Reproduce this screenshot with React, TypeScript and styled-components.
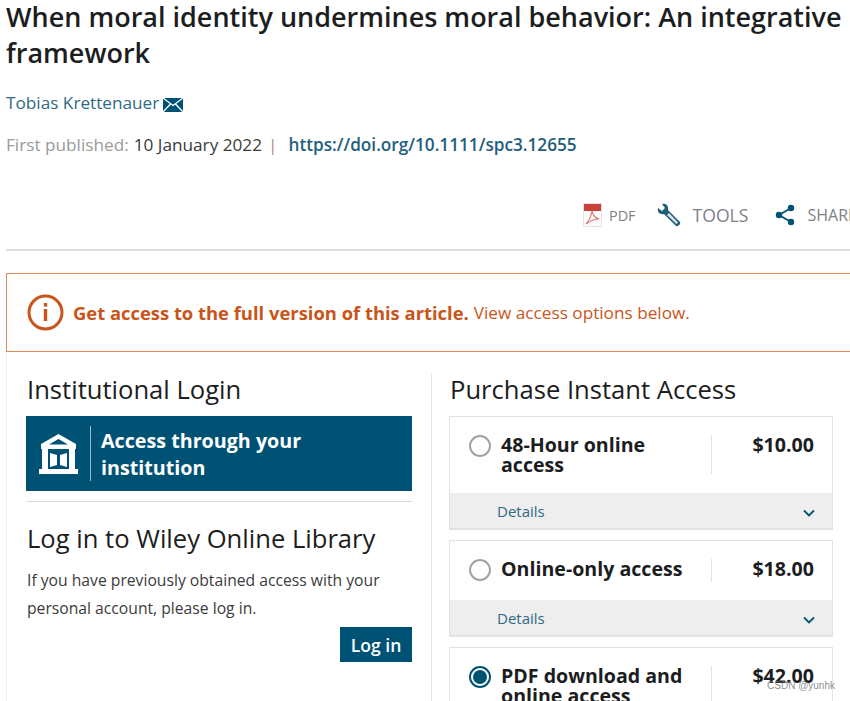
import styled, { createGlobalStyle } from "styled-components";

const GlobalStyle = createGlobalStyle`
  html, body {
    margin: 0;
    padding: 0;
    background: #fff;
    overflow: hidden;
  }
  body {
    font-family: "Open Sans", "Liberation Sans", sans-serif;
    color: #1b1b1b;
  }
`;

const Page = styled.div`
  width: 850px;
  height: 701px;
  overflow: hidden;
  padding-left: 6px;
  box-sizing: border-box;
  position: relative;
`;

const Title = styled.h1`
  margin: -1px 0 0;
  font-size: 27px;
  line-height: 36px;
  font-weight: 600;
  color: #1c1d1e;
  white-space: nowrap;
`;

const Author = styled.div`
  margin-top: 18px;
  height: 26px;
  display: flex;
  align-items: center;
  font-size: 17.2px;
  color: #2f6a85;
`;

const Mail = styled.svg`
  margin-left: 4px;
  margin-top: 6px;
`;

const Meta = styled.div`
  margin-top: 16px;
  height: 26px;
  display: flex;
  align-items: center;
  font-size: 17.2px;
  white-space: nowrap;
`;

const MetaLabel = styled.span`
  color: #9a9a9a;
`;

const MetaDate = styled.span`
  color: #3a3a3a;
  margin-left: 5px;
`;

const MetaBar = styled.span`
  color: #b08a70;
  margin: 0 11px 0 6px;
`;

const DoiLink = styled.span`
  color: #1f5e7d;
  font-weight: 600;
`;

const Tools = styled.div`
  margin-top: 42px;
  height: 32px;
  display: flex;
  align-items: center;
  padding-left: 577px;
  white-space: nowrap;
  border-bottom: 2px solid #dcdcdc;
  padding-bottom: 18px;
`;

const ToolItem = styled.div<{ $gap: number; $next: number; $size: number }>`
  display: flex;
  align-items: center;
  gap: ${(p) => p.$gap}px;
  margin-right: ${(p) => p.$next}px;
  font-size: ${(p) => p.$size}px;
  color: #7d8186;
`;

const Banner = styled.div`
  margin-top: 22px;
  height: 77px;
  width: 860px;
  border: 1px solid #e08a55;
  display: flex;
  align-items: center;
  padding-left: 20px;
  font-size: 17.2px;
  white-space: nowrap;
  color: #c9551a;
`;

const BannerStrong = styled.strong`
  font-size: 18.4px;
  font-weight: 700;
  margin-left: 9px;
`;

const BannerRest = styled.span`
  margin-left: 5px;
`;

const Columns = styled.div`
  display: grid;
  grid-template-columns: 425px 1fr;
  border-left: 1px solid #eeeeee;
  height: 360px;
`;

const LeftCol = styled.div`
  padding: 0 19px 0 20px;
  border-right: 1px solid #e4e4e4;
  margin-top: 21px;
`;

const RightCol = styled.div`
  padding: 0 17px 0 17px;
  margin-top: 21px;
`;

const Heading = styled.h2`
  margin: 0;
  font-size: 25.6px;
  line-height: 34px;
  font-weight: 400;
  color: #1c1d1e;
  white-space: nowrap;
`;

const PurchaseHeading = styled(Heading)`
  padding-left: 1px;
`;

const InstButton = styled.div`
  margin: 9px 0 0 -1px;
  height: 75px;
  background: #005274;
  display: flex;
  align-items: center;
  padding-left: 12px;
  color: #fff;
`;

const InstDivider = styled.div`
  width: 1px;
  height: 55px;
  background: #9fbccb;
  margin: 0 10px 0 11px;
`;

const InstText = styled.div`
  font-size: 19.7px;
  line-height: 27px;
  font-weight: 700;
`;

const Rule = styled.div`
  margin-top: 10px;
  height: 1px;
  background: #d8d8d8;
`;

const LoginHeading = styled(Heading)`
  margin-top: 20px;
`;

const LoginText = styled.p`
  margin: 10px 0 0;
  font-size: 15.7px;
  line-height: 28px;
  color: #3b3b3b;
`;

const LoginRow = styled.div`
  margin-top: 5px;
  display: flex;
  justify-content: flex-end;
`;

const LoginButton = styled.div`
  width: 72px;
  height: 35px;
  background: #005274;
  color: #fff;
  font-size: 17.6px;
  font-weight: 600;
  display: flex;
  align-items: center;
  justify-content: center;
`;

const OptionList = styled.div`
  margin-top: 9px;
  display: flex;
  flex-direction: column;
  gap: 10px;
`;

const Option = styled.div`
  border: 1px solid #e2e2e2;
  border-bottom-width: 2px;
`;

const OptionMain = styled.div<{ $height: number }>`
  height: ${(p) => p.$height}px;
  display: flex;
  align-items: flex-start;
  padding: 18px 18px 0 19px;
  box-sizing: border-box;
`;

const Radio = styled.div<{ $on?: boolean }>`
  flex: none;
  width: 22px;
  height: 22px;
  box-sizing: border-box;
  border-radius: 50%;
  border: 2px solid ${(p) => (p.$on ? "#005274" : "#a3a3a3")};
  display: flex;
  align-items: center;
  justify-content: center;

  &::after {
    content: "";
    display: ${(p) => (p.$on ? "block" : "none")};
    width: 14px;
    height: 14px;
    border-radius: 50%;
    background: #005274;
  }
`;

const OptionName = styled.div`
  flex: none;
  width: 210px;
  box-sizing: border-box;
  padding-right: 10px;
  margin-left: 10px;
  font-size: 19.6px;
  line-height: 20px;
  font-weight: 700;
  color: #1c1d1e;
`;

const OptionPrice = styled.div<{ $rule: number }>`
  flex: 1;
  height: ${(p) => p.$rule}px;
  border-left: 1px solid #e2e2e2;
  text-align: right;
  font-size: 19.6px;
  line-height: 20px;
  font-weight: 700;
  color: #1c1d1e;
`;

const DetailsBar = styled.div`
  height: 35px;
  background: #eeeeee;
  display: flex;
  align-items: center;
  justify-content: space-between;
  padding: 0 16px 0 47px;
  font-size: 15px;
  color: #2f6a85;
`;

const ChevronIcon = styled.svg`
  margin-top: 4px;
`;

const Watermark = styled.div`
  position: absolute;
  right: 15px;
  top: 680px;
  font-size: 10px;
  font-family: "Liberation Sans", sans-serif;
  color: rgba(120, 120, 120, 0.85);
`;

function Chevron() {
  return (
    <ChevronIcon width="14" height="10" viewBox="0 0 14 10" fill="none">
      <path d="M2 2.5 L7 7.5 L12 2.5" stroke="#005274" strokeWidth="1.8" />
    </ChevronIcon>
  );
}

const plans = [
  { name: "48-Hour online access", price: "$10.00", height: 76, rule: 39, on: false },
  { name: "Online-only access", price: "$18.00", height: 59, rule: 23, on: false },
  { name: "PDF download and online access", price: "$42.00", height: 76, rule: 39, on: true },
];

export default function App() {
  return (
    <Page>
      <GlobalStyle />
      <Title>
        When moral identity undermines moral behavior: An integrative
        <br />
        framework
      </Title>
      <Author>
        Tobias Krettenauer
        <Mail width="20" height="14" viewBox="0 0 20 14">
          <rect width="20" height="14" fill="#005274" />
          <path d="M0 0 L10 7.5 L20 0 M0 14 L7.5 6 M20 14 L12.5 6" stroke="#fff" strokeWidth="1.3" fill="none" />
        </Mail>
      </Author>
      <Meta>
        <MetaLabel>First published:</MetaLabel>
        <MetaDate>10 January 2022</MetaDate>
        <MetaBar>|</MetaBar>
        <DoiLink>https://doi.org/10.1111/spc3.12655</DoiLink>
      </Meta>
      <Tools>
        <ToolItem $gap={7} $next={21} $size={14.4}>
          <svg width="19" height="24" viewBox="0 0 19 24">
            <rect x="0.5" y="0.5" width="18" height="23" fill="#fbfbfb" stroke="#e3e3e3" />
            <rect x="1" y="1" width="17" height="7" fill="#c9403a" />
            <path d="M9 8 C8 14 6 18 3 21 C7 18 11 16 16 16 C12 15 10 12 9 8 Z" fill="none" stroke="#dc7d78" strokeWidth="1.2" />
          </svg>
          PDF
        </ToolItem>
        <ToolItem $gap={12} $next={27} $size={17.6}>
          <svg width="24" height="24" viewBox="0 0 24 24">
            <path d="M1 5 L5 8 L8 5 L5 1 C9 0 12 3 11 7 L23 19 C24 21 21 24 19 23 L7 11 C3 12 0 9 1 5 Z" fill="#1f5e7d" />
            <path d="M12 10 L21 19.5 L19.5 21 L10 12 Z" fill="#dfe8ed" />
          </svg>
          TOOLS
        </ToolItem>
        <ToolItem $gap={12} $next={0} $size={16}>
          <svg width="20" height="22" viewBox="0 0 20 22">
            <path d="M16 4 L4 11 L16 18" stroke="#005274" strokeWidth="1.8" fill="none" />
            <circle cx="16" cy="4" r="3.2" fill="#005274" />
            <circle cx="4" cy="11" r="3.2" fill="#005274" />
            <circle cx="16" cy="18" r="3.2" fill="#005274" />
          </svg>
          SHARE
        </ToolItem>
      </Tools>
      <Banner>
        <svg width="37" height="37" viewBox="0 0 37 37">
          <circle cx="18.5" cy="18.5" r="16.5" fill="none" stroke="#c9551a" strokeWidth="3" />
          <rect x="16.8" y="15" width="3.4" height="12" fill="#c9551a" />
          <rect x="16.8" y="9" width="3.4" height="3.6" fill="#c9551a" />
        </svg>
        <BannerStrong>Get access to the full version of this article.</BannerStrong>
        <BannerRest>View access options below.</BannerRest>
      </Banner>
      <Columns>
        <LeftCol>
          <Heading>Institutional Login</Heading>
          <InstButton>
            <svg width="41" height="40" viewBox="0 0 41 40" fill="#fff">
              <path d="M20.5 0 L38 10 L38 15 L3 15 L3 10 Z M20.5 5 L11 10.5 L30 10.5 Z" fillRule="evenodd" />
              <rect x="4" y="15" width="6" height="21" />
              <rect x="31" y="15" width="6" height="21" />
              <path d="M12 19 L19 21 L19 31 L12 33 Z M29 19 L22 21 L22 31 L29 33 Z" />
              <rect x="1" y="35" width="39" height="5" />
            </svg>
            <InstDivider />
            <InstText>
              Access through your
              <br />
              institution
            </InstText>
          </InstButton>
          <Rule />
          <LoginHeading>Log in to Wiley Online Library</LoginHeading>
          <LoginText>
            If you have previously obtained access with your
            <br />
            personal account, please log in.
          </LoginText>
          <LoginRow>
            <LoginButton>Log in</LoginButton>
          </LoginRow>
        </LeftCol>
        <RightCol>
          <PurchaseHeading>Purchase Instant Access</PurchaseHeading>
          <OptionList>
            {plans.map((plan) => (
              <Option key={plan.name}>
                <OptionMain $height={plan.height}>
                  <Radio $on={plan.on} />
                  <OptionName>{plan.name}</OptionName>
                  <OptionPrice $rule={plan.rule}>{plan.price}</OptionPrice>
                </OptionMain>
                <DetailsBar>
                  Details
                  <Chevron />
                </DetailsBar>
              </Option>
            ))}
          </OptionList>
        </RightCol>
      </Columns>
      <Watermark>CSDN @yunhk</Watermark>
    </Page>
  );
}
